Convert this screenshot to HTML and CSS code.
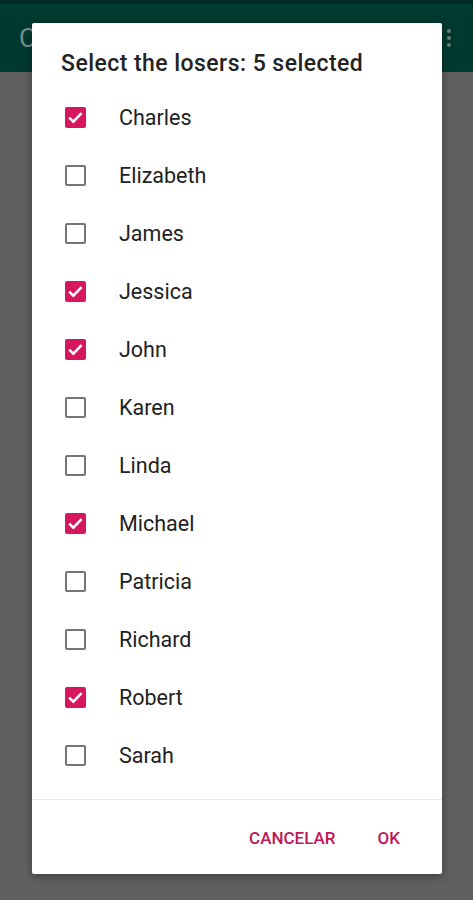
FILE: index.html
```html
<!DOCTYPE html>
<html>
<head>
<meta charset="utf-8">
<link rel="stylesheet" href="styles.css">
</head>
<body>
<div class="screen">
  <div class="statusbar"></div>
  <div class="appbar">
    <span class="appbar-title">C</span>
    <span class="overflow"><i></i><i></i><i></i></span>
  </div>
  <div class="content"></div>

  <div class="dialog">
    <div class="dialog-title">Select the losers: 5 selected</div>
    <ul class="list">
      <li class="item"><span class="cb on"><svg viewBox="0 0 21 21"><polyline points="4.2,10.6 8.4,14.6 16.6,6.2"/></svg></span><span class="label">Charles</span></li>
      <li class="item"><span class="cb"></span><span class="label">Elizabeth</span></li>
      <li class="item"><span class="cb"></span><span class="label">James</span></li>
      <li class="item"><span class="cb on"><svg viewBox="0 0 21 21"><polyline points="4.2,10.6 8.4,14.6 16.6,6.2"/></svg></span><span class="label">Jessica</span></li>
      <li class="item"><span class="cb on"><svg viewBox="0 0 21 21"><polyline points="4.2,10.6 8.4,14.6 16.6,6.2"/></svg></span><span class="label">John</span></li>
      <li class="item"><span class="cb"></span><span class="label">Karen</span></li>
      <li class="item"><span class="cb"></span><span class="label">Linda</span></li>
      <li class="item"><span class="cb on"><svg viewBox="0 0 21 21"><polyline points="4.2,10.6 8.4,14.6 16.6,6.2"/></svg></span><span class="label">Michael</span></li>
      <li class="item"><span class="cb"></span><span class="label">Patricia</span></li>
      <li class="item"><span class="cb"></span><span class="label">Richard</span></li>
      <li class="item"><span class="cb on"><svg viewBox="0 0 21 21"><polyline points="4.2,10.6 8.4,14.6 16.6,6.2"/></svg></span><span class="label">Robert</span></li>
      <li class="item"><span class="cb"></span><span class="label">Sarah</span></li>
    </ul>
    <div class="divider"></div>
    <div class="actions">
      <button class="btn">CANCELAR</button>
      <button class="btn">OK</button>
    </div>
  </div>
</div>
</body>
</html>
```

FILE: styles.css
```css
* { box-sizing: border-box; }
html, body { margin: 0; padding: 0; }
body {
  font-family: Roboto, "Noto Sans", "Liberation Sans", sans-serif;
  background: #606060;
}
.screen {
  position: relative;
  width: 473px;
  height: 900px;
  overflow: hidden;
  display: flex;
  flex-direction: column;
}
.statusbar {
  height: 4px;
  background: #022a24;
}
.appbar {
  height: 68px;
  background: #00392f;
  display: flex;
  align-items: center;
  justify-content: space-between;
  padding: 0 22px 0 19px;
}
.appbar-title {
  color: #7b8c88;
  font-size: 26px;
  line-height: 1;
}
.overflow {
  display: flex;
  flex-direction: column;
  gap: 3px;
}
.overflow i {
  display: block;
  width: 4px;
  height: 4px;
  border-radius: 50%;
  background: #6c7e7a;
}
.content {
  flex: 1;
  background: #606060;
}
.dialog {
  position: absolute;
  left: 32px;
  top: 23px;
  width: 410px;
  height: 851px;
  background: #ffffff;
  border-radius: 2px;
  box-shadow: 0 3px 8px rgba(0,0,0,0.35);
  display: flex;
  flex-direction: column;
}
.dialog-title {
  padding: 27px 0 10px 29px;
  height: 65px;
  font-size: 23px;
  letter-spacing: 0.45px;
  line-height: 28px;
  font-weight: 500;
  color: #232323;
}
.list {
  list-style: none;
  margin: 0;
  padding: 0 0 15px 0;
}
.item {
  height: 58px;
  display: flex;
  align-items: center;
  padding-left: 33px;
}
.cb {
  width: 21px;
  height: 21px;
  border: 2.4px solid #757575;
  border-radius: 2px;
  flex: none;
  display: flex;
  align-items: center;
  justify-content: center;
}
.cb.on {
  background: #d6175e;
  border-color: #d6175e;
}
.cb svg {
  width: 21px;
  height: 21px;
  flex: none;
}
.cb polyline {
  fill: none;
  stroke: #ffffff;
  stroke-width: 2.6;
}
.label {
  margin-left: 33px;
  font-size: 21.5px;
  color: #222222;
}
.divider {
  height: 1px;
  background: #ececec;
}
.actions {
  flex: 1;
  display: flex;
  justify-content: flex-end;
  align-items: flex-start;
  gap: 26px;
  padding: 26px 34px 0 0;
}
.btn {
  font-family: Roboto, "Noto Sans", "Liberation Sans", sans-serif;
  font-weight: 500;
  font-size: 17px;
  line-height: 24px;
  color: #bf1658;
  background: none;
  border: 0;
  padding: 0 8px;
}
```
